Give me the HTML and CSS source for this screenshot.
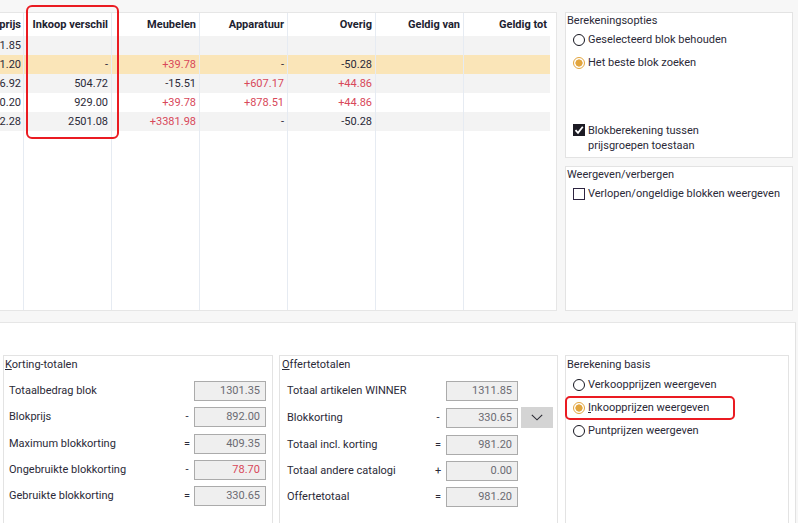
FILE: index.html
```html
<!DOCTYPE html>
<html>
<head>
<meta charset="utf-8">
<link rel="stylesheet" href="styles.css">
</head>
<body>
<div class="page">
  <div class="top">
    <div class="tablepanel">
      <div class="grid">
        <div class="row head">
          <div>Blokprijs</div><div>Inkoop verschil</div><div>Meubelen</div><div>Apparatuur</div><div>Overig</div><div>Geldig van</div><div>Geldig tot</div>
        </div>
        <div class="row odd">
          <div>1311.85</div><div></div><div></div><div></div><div></div><div></div><div></div>
        </div>
        <div class="row sel">
          <div>981.20</div><div>-</div><div class="red">+39.78</div><div>-</div><div>-50.28</div><div></div><div></div>
        </div>
        <div class="row odd">
          <div>1816.92</div><div>504.72</div><div>-15.51</div><div class="red">+607.17</div><div class="red">+44.86</div><div></div><div></div>
        </div>
        <div class="row even">
          <div>2410.20</div><div>929.00</div><div class="red">+39.78</div><div class="red">+878.51</div><div class="red">+44.86</div><div></div><div></div>
        </div>
        <div class="row odd">
          <div>5852.28</div><div>2501.08</div><div class="red">+3381.98</div><div>-</div><div>-50.28</div><div></div><div></div>
        </div>
        <div class="row fill">
          <div></div><div></div><div></div><div></div><div></div><div></div><div></div>
        </div>
      </div>
    </div>
    <div class="side">
      <div class="box opts">
        <div class="title">Berekeningsopties</div>
        <div class="opt"><span class="radio"></span><span>Geselecteerd blok behouden</span></div>
        <div class="opt"><span class="radio on"></span><span>Het beste blok zoeken</span></div>
        <div class="opt multi"><span class="check on"><svg viewBox="0 0 12 12" width="12" height="12"><path d="M2.5 6.2 L5 8.8 L9.8 2.8" fill="none" stroke="#fff" stroke-width="1.8"/></svg></span><span>Blokberekening tussen<br>prijsgroepen toestaan</span></div>
      </div>
      <div class="box shows">
        <div class="title">Weergeven/verbergen</div>
        <div class="opt"><span class="check"></span><span>Verlopen/ongeldige blokken weergeven</span></div>
      </div>
    </div>
  </div>
  <div class="bottom">
    <div class="box panel korting">
      <div class="title"><u>K</u>orting-totalen</div>
      <div class="fields">
        <span class="lbl">Totaalbedrag blok</span><span class="op"></span><span class="val">1301.35</span>
        <span class="lbl">Blokprijs</span><span class="op">-</span><span class="val">892.00</span>
        <span class="lbl">Maximum blokkorting</span><span class="op">=</span><span class="val">409.35</span>
        <span class="lbl">Ongebruikte blokkorting</span><span class="op">-</span><span class="val red">78.70</span>
        <span class="lbl">Gebruikte blokkorting</span><span class="op">=</span><span class="val">330.65</span>
      </div>
    </div>
    <div class="box panel offerte">
      <div class="title"><u>O</u>ffertetotalen</div>
      <div class="fields">
        <span class="lbl">Totaal artikelen WINNER</span><span class="op"></span><span class="val">1311.85</span><span></span>
        <span class="lbl">Blokkorting</span><span class="op">-</span><span class="val">330.65</span><span class="dd"><svg viewBox="0 0 12 7" width="12" height="7"><path d="M0.8 0.8 L6 5.8 L11.2 0.8" fill="none" stroke="#2a2a33" stroke-width="1.1"/></svg></span>
        <span class="lbl">Totaal incl. korting</span><span class="op">=</span><span class="val">981.20</span><span></span>
        <span class="lbl">Totaal andere catalogi</span><span class="op">+</span><span class="val">0.00</span><span></span>
        <span class="lbl">Offertetotaal</span><span class="op">=</span><span class="val">981.20</span><span></span>
      </div>
    </div>
    <div class="box panel basis">
      <div class="title">Berekening basis</div>
      <div class="opt first"><span class="radio"></span><span>Verkoopprijzen weergeven</span></div>
      <div class="opt"><span class="radio on"></span><span><u>I</u>nkoopprijzen weergeven</span></div>
      <div class="opt"><span class="radio"></span><span>Puntprijzen weergeven</span></div>
    </div>
  </div>
  <div class="mark mark-col"></div>
  <div class="mark mark-radio"></div>
</div>
</body>
</html>
```
FILE: styles.css
```css
* { box-sizing: border-box; }

body {
  margin: 0;
  width: 798px;
  height: 523px;
  overflow: hidden;
  background: #f7f7f7;
  font-family: Roboto, "Liberation Sans", Arial, sans-serif;
  font-size: 11px;
  color: #2b2a38;
}

.page {
  position: relative;
  height: 523px;
}

.top {
  display: flex;
  gap: 8px;
  padding-top: 12px;
  height: 311px;
}

.tablepanel {
  width: 557px;
  height: 299px;
  background: #fff;
  border: 1px solid #e6e6e6;
  border-left: none;
  overflow: hidden;
}

.grid {
  margin-left: -40px;
  width: 590px;
  height: 100%;
  display: flex;
  flex-direction: column;
}

.row {
  display: grid;
  grid-template-columns: 63px 88px 88px 88px 88px 88px 87px;
  height: 19px;
  flex: none;
}

.row > div {
  border-left: 1px solid #e6ebf2;
  text-align: right;
  padding-right: 3px;
  line-height: 19px;
  white-space: nowrap;
  overflow: hidden;
}

.row > div:first-child {
  border-left: none;
  padding-right: 2px;
}

.head {
  height: 23px;
}

.head > div {
  line-height: 23px;
  font-weight: 700;
  color: #1d2230;
}

.odd { background: #f3f3f3; }
.even { background: #fff; }
.sel { background: #fae5b8; }

.fill {
  flex: 1;
  height: auto;
}

.red { color: #d8485a; }

.side {
  width: 228px;
  display: flex;
  flex-direction: column;
  gap: 8px;
}

.box {
  background: #fff;
  border: 1px solid #e3e3e3;
}

.opts {
  height: 146px;
  padding: 0 2px 0 1px;
}

.shows {
  height: 145px;
  padding: 0 2px 0 1px;
}

.title {
  line-height: 15px;
  padding-top: 1px;
  color: #2b2a38;
  white-space: nowrap;
}

.side .title {
  padding-top: 0;
}

.opt {
  display: flex;
  align-items: center;
  gap: 3px;
  height: 23px;
  padding-left: 6px;
  white-space: nowrap;
}

.opt.multi {
  align-items: flex-start;
  height: auto;
  margin-top: 49px;
  line-height: 15px;
}

.opt.multi .check {
  margin-top: 1px;
}

.radio {
  flex: none;
  width: 12px;
  height: 12px;
  border-radius: 50%;
  border: 1px solid #15151f;
  background: #fff;
}

.radio.on {
  border-color: #e2a53e;
  background: radial-gradient(circle, #e2a53e 0 3.3px, #fff 3.9px);
}

.check {
  flex: none;
  width: 12px;
  height: 12px;
  border: 1px solid #2d2440;
  background: #fff;
  display: flex;
}

.check.on {
  background: #1c1b24;
  border-color: #1c1b24;
}

.check svg {
  margin: -1px;
}

.bottom {
  margin-top: 11px;
  height: 201px;
  width: 796px;
  background: #fff;
  border-top: 1px solid #e6e6e6;
  border-right: 1px solid #e2e2e2;
  display: flex;
  padding: 32px 0 0 3px;
  overflow: hidden;
}

.panel {
  flex: none;
  height: 190px;
}

.korting {
  width: 270px;
  padding: 0 6px 0 1px;
}

.offerte {
  width: 279px;
  margin-left: 6px;
  padding: 0 4px 0 2px;
}

.basis {
  width: 224px;
  margin-left: 7px;
  padding: 0 2px 0 1px;
}

.fields {
  display: grid;
  row-gap: 6.25px;
  padding-top: 9px;
  align-items: center;
}

.korting .fields {
  grid-template-columns: 1fr 14px 72px;
  padding-left: 4px;
}

.offerte .fields {
  grid-template-columns: 1fr 16px 72px 35px;
  padding-left: 5px;
}

.lbl {
  line-height: 20px;
  white-space: nowrap;
}

.op {
  text-align: center;
  line-height: 20px;
}

.val {
  height: 20px;
  border: 1px solid #ababab;
  background: #efefef;
  text-align: right;
  padding-right: 5px;
  line-height: 18px;
  color: #6b6b72;
}

.val.red { color: #d8485a; }

.dd {
  margin-left: 3px;
  height: 21px;
  background: #d4d4d4;
  display: flex;
  align-items: center;
  justify-content: center;
}

.basis .opt {
  padding-left: 6px;
}

.basis .opt.first {
  margin-top: 1px;
}

.mark {
  position: absolute;
  border: 2px solid #ea1b22;
  border-radius: 6px;
  pointer-events: none;
}

.mark-col {
  left: 26px;
  top: 5px;
  width: 93px;
  height: 134px;
}

.mark-radio {
  left: 565px;
  top: 396px;
  width: 170px;
  height: 24px;
  border-radius: 5px;
}
```
